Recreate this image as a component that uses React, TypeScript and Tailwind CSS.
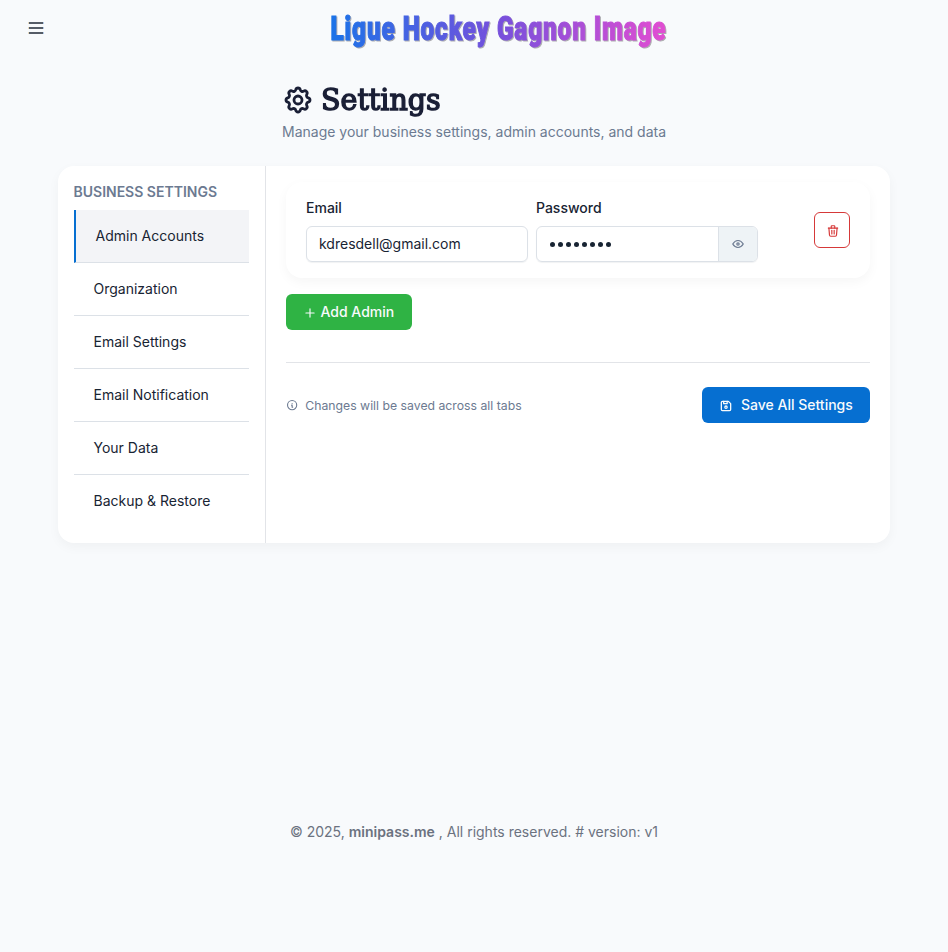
import React from 'react';
import { TbSettings, TbTrash, TbEye, TbPlus, TbDeviceFloppy, TbInfoCircle } from 'react-icons/tb';

const tabs = [
  'Admin Accounts',
  'Organization',
  'Email Settings',
  'Email Notification',
  'Your Data',
  'Backup & Restore',
];

function Header() {
  return (
    <header className="flex h-14 items-center">
      <button className="ml-7 flex w-4 flex-col gap-[3px]" aria-label="Menu">
        <span className="h-0.5 w-4 border-x border-l-[#e6d9bf] border-r-[#b5cbe8] bg-[#555c67]" />
        <span className="h-0.5 w-4 border-x border-l-[#e6d9bf] border-r-[#b5cbe8] bg-[#555c67]" />
        <span className="h-0.5 w-4 border-x border-l-[#e6d9bf] border-r-[#b5cbe8] bg-[#555c67]" />
      </button>
      <div className="ml-[286px] h-14 w-[340px]">
        <svg
          width="340"
          height="56"
          viewBox="0 0 340 56"
          className="block overflow-visible [filter:drop-shadow(1px_1px_0_#acacb0)]"
          aria-label="Ligue Hockey Gagnon Image"
        >
          <defs>
            <linearGradient id="brand" gradientUnits="userSpaceOnUse" x1="0" y1="0" x2="336" y2="0">
              <stop offset="0" stopColor="#1a73e8" />
              <stop offset="0.5" stopColor="#7650dc" />
              <stop offset="1" stopColor="#e24dd2" />
            </linearGradient>
          </defs>
          <text
            x="0.5"
            y="39.5"
            textLength="336"
            lengthAdjust="spacingAndGlyphs"
            className="font-['Roboto'] text-[33px] font-black tracking-[1.2px]"
            fill="url(#brand)"
            stroke="url(#brand)"
            strokeWidth="1.1"
          >
            Ligue Hockey Gagnon Image
          </text>
        </svg>
      </div>
    </header>
  );
}

function Sidebar() {
  return (
    <nav className="w-52 border-r border-[#e2e4e8] px-4 pt-4 pb-4">
      <h4 className="-ml-[0.5px] text-sm leading-5 font-semibold text-[#6c7a91]">BUSINESS SETTINGS</h4>
      <div className="mt-2">
        {tabs.map((tab, i) => (
          <a
            key={tab}
            className={
              i === 0
                ? 'flex h-[53px] items-center border-b border-l-2 border-b-[#dce1e7] border-l-[#066fd1] bg-[#f3f4f7] px-[19.5px]'
                : i === tabs.length - 1
                  ? 'flex h-[52px] items-center px-[19.5px]'
                  : 'flex h-[53px] items-center border-b border-[#dce1e7] px-[19.5px]'
            }
          >
            {tab}
          </a>
        ))}
      </div>
    </nav>
  );
}

function AdminCard() {
  return (
    <div className="flex h-24 justify-between rounded-2xl bg-white px-5 pt-4 shadow-[0_4px_12px_rgba(0,0,0,0.04)]">
      <div className="flex gap-2">
        <label className="block w-[222px]">
          <span className="block leading-5 font-medium">Email</span>
          <div className="mt-2 flex h-9 items-center rounded-md border border-[#dce1e7] px-3 shadow-[0_1px_1px_rgba(24,36,51,0.06)]">
            kdresdell@gmail.com
          </div>
        </label>
        <label className="block w-[222px]">
          <span className="block leading-5 font-medium">Password</span>
          <div className="mt-2 flex h-9 rounded-md border border-[#dce1e7] shadow-[0_1px_1px_rgba(24,36,51,0.06)]">
            <div className="flex flex-1 items-center gap-[3px] pt-px pl-[13px]">
              {Array.from({ length: 8 }, (_, i) => (
                <span key={i} className="size-[5px] rounded-full bg-[#182433]" />
              ))}
            </div>
            <div className="flex w-[39px] items-center justify-center rounded-r-[5px] border-l border-[#dce1e7] bg-[#eef3f6] text-[#6c7a91]">
              <TbEye size={14} strokeWidth={2.1} />
            </div>
          </div>
        </label>
      </div>
      <button className="mt-[14px] flex size-9 items-center justify-center rounded-md border border-[#d63939] text-[#d63939]" aria-label="Delete">
        <TbTrash size={14} className="mt-px ml-px" />
      </button>
    </div>
  );
}

export default function App() {
  return (
    <div className="flex h-[952px] w-full flex-col overflow-hidden bg-[#f8fafc] font-['Inter',sans-serif] text-sm leading-5 text-[#182433]">
      <Header />
      <div className="mt-[26px] flex w-[384px] flex-col self-center">
        <h1 className="flex h-9 items-center text-[#1a1f36]">
          <TbSettings size={32} className="mb-px shrink-0" strokeWidth={2.1} />
          <span className="ml-[7px] inline-block origin-left scale-x-[0.95] font-['DejaVu_Serif',serif] text-[30px] leading-9 font-normal [-webkit-text-stroke:1.5px_#1a1f36]">
            Settings
          </span>
        </h1>
        <p className="mt-1 whitespace-nowrap text-[#6c7a91]">Manage your business settings, admin accounts, and data</p>
      </div>
      <main className="mt-6 flex h-[377px] w-[832px] self-center rounded-2xl bg-white shadow-[0_4px_12px_rgba(0,0,0,0.04)]">
        <Sidebar />
        <section className="flex-1 px-5 pt-4">
          <AdminCard />
          <button className="mt-4 flex h-9 w-[126px] items-center rounded-md bg-[#2fb344] pl-[17px] font-medium text-[#f8fafc]">
            <TbPlus size={14} className="mt-px" />
            <span className="ml-[3.5px]">Add Admin</span>
          </button>
          <div className="mt-8 flex items-center justify-between border-t border-[#e2e4e8] pt-6">
            <div className="flex items-center text-[12.25px] text-[#6c7a91]">
              <TbInfoCircle size={12.25} strokeWidth={2.2} />
              <span className="ml-[7px] pt-0.5">Changes will be saved across all tabs</span>
            </div>
            <button className="flex h-9 w-[168px] items-center rounded-md bg-[#066fd1] pl-[17px] font-medium text-[#f8fafc]">
              <TbDeviceFloppy size={14} strokeWidth={2.2} className="mt-px" />
              <span className="ml-2">Save All Settings</span>
            </button>
          </div>
        </section>
      </main>
      <footer className="mt-[279px] text-center text-[#6b7280]">
        © 2025, <strong className="font-semibold">minipass.me</strong> , All rights reserved. # version: v1
      </footer>
    </div>
  );
}
